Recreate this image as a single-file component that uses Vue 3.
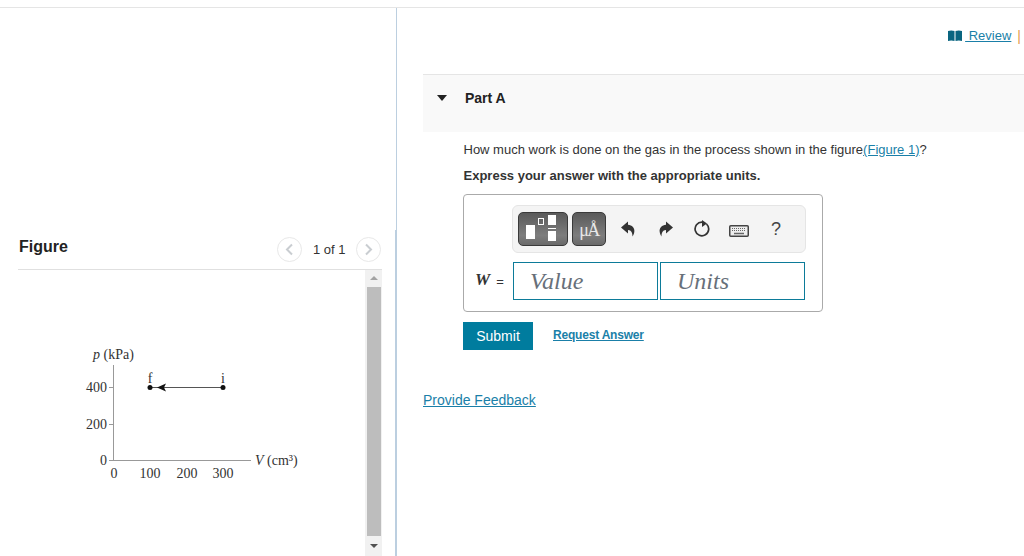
<script setup>
const ticksY = [
  { label: '400', y: 47 },
  { label: '200', y: 84 },
  { label: '0', y: 120 },
]
const ticksX = [
  { label: '0', x: 44 },
  { label: '100', x: 80 },
  { label: '200', x: 117 },
  { label: '300', x: 153 },
]
</script>

<template>
  <div class="page">
    <aside class="left">
      <div class="pane">
        <header class="fig-head">
          <h2 class="fig-title">Figure</h2>
          <div class="pager">
            <span class="circle">
              <svg width="9" height="13" viewBox="0 0 9 13"><path d="M7 1.5 2 6.5 7 11.5" fill="none" stroke="#c9cdd1" stroke-width="2" /></svg>
            </span>
            <span class="pager-text">1 of 1</span>
            <span class="circle">
              <svg width="9" height="13" viewBox="0 0 9 13"><path d="M2 1.5 7 6.5 2 11.5" fill="none" stroke="#c9cdd1" stroke-width="2" /></svg>
            </span>
          </div>
        </header>
        <div class="fig-body">
          <div class="canvas">
            <svg class="graph" width="240" height="150" viewBox="0 0 240 150">
              <g class="serif">
                <text x="23" y="19"><tspan font-style="italic">p</tspan> (kPa)</text>
                <text v-for="t in ticksY" :key="t.label" x="37" :y="t.y + 5" text-anchor="end">{{ t.label }}</text>
                <text v-for="t in ticksX" :key="t.label" :x="t.x" y="138" text-anchor="middle">{{ t.label }}</text>
                <text x="185" y="125"><tspan font-style="italic">V</tspan> (cm³)</text>
                <text x="80" y="43" text-anchor="middle">f</text>
                <text x="153" y="43" text-anchor="middle">i</text>
              </g>
              <path d="M43.5 25V120.500H181" fill="none" stroke="#999" />
              <path d="M39 47.500H44M39 84.500H44M39 120.500H44" fill="none" stroke="#999" />
              <path d="M80 47.500H153" stroke="#555" />
              <path d="M87 47.500 96 43.500 94 47.500 96 51.500Z" fill="#111" />
              <circle cx="80" cy="47.500" r="2.500" fill="#111" />
              <circle cx="153" cy="47.500" r="2.500" fill="#111" />
            </svg>
          </div>
          <div class="scrollbar">
            <span class="arrow-up"></span>
            <span class="thumb"></span>
            <span class="arrow-down"></span>
          </div>
        </div>
      </div>
    </aside>

    <main class="right">
      <div class="review-row">
        <svg class="book" width="14" height="11" viewBox="0 0 14 11"><path d="M0 1C2 .2 4.500 .2 6.500 1V11C4.500 10.200 2 10.200 0 11zM7.500 1C9.500 .2 12 .2 14 1V11C12 10.200 9.500 10.200 7.500 11z" fill="#0a6580" /></svg>
        <a class="review">&nbsp;Review</a>
        <span class="pipe">|</span>
      </div>

      <div class="part-head">
        <span class="caret"></span>
        <span class="part-title">Part A</span>
      </div>

      <div class="part-body">
        <p class="question">How much work is done on the gas in the process shown in the figure<a class="link">(Figure 1)</a>?</p>
        <p class="instruction">Express your answer with the appropriate units.</p>

        <div class="answer">
          <div class="toolbar">
            <button class="tool tool-wide">
              <svg width="48" height="32" viewBox="0 0 48 32">
                <rect x="7" y="12" width="9" height="14" fill="#fff" />
                <rect x="19.500" y="5.500" width="5" height="6" fill="none" stroke="#fff" />
                <rect x="29" y="2" width="8" height="10" fill="#fff" />
                <rect x="29" y="15" width="8" height="1" fill="#fff" />
                <rect x="29" y="18" width="8" height="10" fill="#fff" />
              </svg>
            </button>
            <button class="tool tool-unit">μÅ</button>
            <svg class="ic ic-undo" width="16" height="16" viewBox="0 0 16 16"><path d="M1 6.500 8 .5V3.800C12 4 15 7 14.300 11 14 13 13 14.500 12.500 15.500 12.500 12 11.500 9 8 9V12.500Z" fill="#333" /></svg>
            <svg class="ic ic-redo" width="16" height="16" viewBox="0 0 16 16"><path transform="matrix(-1 0 0 1 16 0)" d="M1 6.500 8 .5V3.800C12 4 15 7 14.300 11 14 13 13 14.500 12.500 15.500 12.500 12 11.500 9 8 9V12.500Z" fill="#333" /></svg>
            <svg class="ic ic-reload" width="18" height="18" viewBox="0 0 18 18"><path d="M12.500 4A6.800 6.800 0 1 1 8 2.200" fill="none" stroke="#333" stroke-width="1.700" /><path d="M8 0 13 3.500 8 7Z" fill="#333" /></svg>
            <svg class="ic ic-keys" width="20" height="12" viewBox="0 0 20 12"><rect x="0.750" y="0.750" width="18.500" height="10.500" rx="1" fill="#eee" stroke="#444" stroke-width="1.500" /><path d="M3 3.500h14M3 5.500h14" stroke="#666" stroke-dasharray="1 1" /><path d="M5 8.500h10" stroke="#666" stroke-width="1.500" /></svg>
            <span class="help">?</span>
          </div>
          <div class="inputs">
            <span class="var"><i>W</i><span class="eq">=</span></span>
            <div class="field">Value</div>
            <div class="field">Units</div>
          </div>
        </div>

        <div class="actions">
          <button class="submit">Submit</button>
          <a class="request">Request Answer</a>
        </div>
      </div>

      <a class="feedback">Provide Feedback</a>
    </main>
  </div>
</template>

<style>
html, body { margin: 0; background: #fff; overflow: hidden; }
</style>

<style scoped>
.page {
  width: 1024px;
  height: 556px;
  box-sizing: border-box;
  padding-top: 7px;
  display: flex;
  flex-wrap: wrap;
  align-content: flex-start;
  font-family: "Liberation Sans", Arial, sans-serif;
  color: #333;
  overflow: hidden;
}
.page::before {
  content: "";
  flex: 0 0 100%;
  height: 1px;
  background: #e5e5e5;
}
.left {
  width: 397px;
  height: 548px;
  flex: none;
  box-sizing: border-box;
  border-right: 1px solid #bccfe0;
  padding-top: 222px;
  display: flex;
}
.pane {
  width: 100%;
  box-sizing: border-box;
  border-right: 1px solid #bccfe0;
  padding: 0 13px 0 18px;
  display: flex;
  flex-direction: column;
}
.fig-head {
  height: 40px;
  flex: none;
  box-sizing: border-box;
  display: flex;
  justify-content: space-between;
  border-bottom: 1px solid #e0e0e0;
}
.fig-title {
  margin: 7px 0 0 1px;
  font-size: 16px;
  line-height: 20px;
  font-weight: 700;
  color: #222;
}
.pager {
  display: flex;
  align-items: center;
  gap: 11px;
  height: 25px;
  margin: 7px 1px 0 0;
}
.circle {
  width: 25px;
  height: 25px;
  box-sizing: border-box;
  border: 1px solid #e8e8e8;
  border-radius: 50%;
  display: flex;
  align-items: center;
  justify-content: center;
}
.pager-text {
  width: 32px;
  font-size: 13px;
  white-space: nowrap;
  color: #333;
}
.fig-body {
  flex: 1;
  display: flex;
  min-height: 0;
}
.canvas {
  flex: 1;
  padding: 70px 0 0 52px;
}
.graph {
  display: block;
}
.serif text {
  font-family: "Liberation Serif", serif;
  font-size: 14px;
  fill: #333;
}
.scrollbar {
  width: 17px;
  flex: none;
  background: #f1f1f1;
  display: flex;
  flex-direction: column;
  align-items: center;
}
.arrow-up, .arrow-down {
  width: 0;
  height: 0;
  border-left: 4px solid transparent;
  border-right: 4px solid transparent;
}
.arrow-up {
  border-bottom: 4px solid #a3a3a3;
  margin: 6px 0 7px;
}
.arrow-down {
  border-top: 4px solid #505050;
  margin-top: 8px;
}
.thumb {
  width: 14px;
  height: 249px;
  background: #bdbdbd;
}
.right {
  flex: 1;
  min-width: 0;
  display: flex;
  flex-direction: column;
  padding-left: 26px;
}
.review-row {
  height: 66px;
  box-sizing: border-box;
  padding: 19px 3px 0 0;
  display: flex;
  justify-content: flex-end;
  align-items: flex-start;
  font-size: 13px;
  line-height: 18px;
}
.book {
  margin: 3px 3px 0 0;
}
.review {
  color: #1a7fa8;
  text-decoration: underline;
}
.pipe {
  color: #e59a4a;
  margin-left: 6px;
  font-size: 14px;
}
.part-head {
  height: 58px;
  box-sizing: border-box;
  border-top: 1px solid #e5e5e5;
  background: #f9f9f9;
  display: flex;
  align-items: flex-start;
  padding: 14px 0 0 14px;
}
.caret {
  width: 0;
  height: 0;
  border-left: 5.5px solid transparent;
  border-right: 5.5px solid transparent;
  border-top: 6px solid #222;
  margin-top: 6px;
}
.part-title {
  margin-left: 18px;
  font-size: 14px;
  font-weight: 700;
  color: #222;
  line-height: 18px;
}
.part-body {
  padding: 9px 0 0 40px;
}
.question, .instruction {
  margin: 0;
  padding-left: 0.5px;
  font-size: 13px;
  line-height: 18px;
}
.instruction {
  margin-top: 8px;
  font-weight: 700;
}
.link {
  color: #1a7fa8;
  text-decoration: underline;
}
.answer {
  width: 360px;
  height: 118px;
  box-sizing: border-box;
  margin-top: 9px;
  border: 1px solid #aaa;
  border-radius: 4px;
  padding: 10px 0 0 11px;
}
.toolbar {
  margin-left: 37px;
  width: 294px;
  height: 48px;
  box-sizing: border-box;
  background: #f4f4f4;
  border: 1px solid #e5e5e5;
  border-radius: 6px;
  display: flex;
  align-items: center;
  padding-left: 5px;
}
.tool {
  height: 34px;
  box-sizing: border-box;
  flex: none;
  padding: 0;
  border: 1px solid #3a3a3a;
  border-radius: 5px;
  background: linear-gradient(#5a5a5a, #7d7d7d 70%, #6a6a6a);
  display: flex;
  align-items: center;
  justify-content: center;
  color: #e8e8e8;
  font-family: "Liberation Serif", serif;
}
.tool svg {
  display: block;
}
.tool-wide {
  width: 50px;
}
.tool-unit {
  width: 34px;
  margin-left: 4px;
  padding-top: 2px;
  font-size: 18px;
  letter-spacing: -1.5px;
}
.ic {
  flex: none;
}
.ic-undo { margin-left: 14px; }
.ic-redo { margin-left: 22px; }
.ic-reload { margin-left: 20px; }
.ic-keys { margin-left: 17px; margin-top: 3px; }
.help {
  margin-left: 22px;
  font-size: 18px;
  color: #444;
}
.inputs {
  display: flex;
  align-items: center;
  margin-top: 9px;
}
.var {
  width: 38px;
  display: flex;
  align-items: center;
  gap: 6px;
  box-sizing: border-box;
}
.var i {
  font-family: "Liberation Serif", serif;
  font-weight: 700;
  font-size: 17px;
  color: #333;
  margin-top: -2px;
}
.eq {
  font-size: 13px;
}
.field {
  width: 145px;
  height: 38px;
  box-sizing: border-box;
  border: 1px solid #0c7b99;
  margin-right: 2px;
  padding-left: 16px;
  font-family: "Liberation Serif", serif;
  font-style: italic;
  font-size: 24px;
  line-height: 37px;
  color: #67707a;
}
.actions {
  display: flex;
  align-items: center;
  margin-top: 10px;
}
.submit {
  width: 70px;
  height: 28px;
  border: 0;
  padding: 0;
  background: #007c9e;
  color: #fff;
  font: 14px "Liberation Sans", Arial, sans-serif;
}
.request {
  margin: 0 0 2px 20px;
  color: #1a7fa8;
  font-size: 12px;
  letter-spacing: -0.2px;
  font-weight: 700;
  text-decoration: underline;
}
.feedback {
  margin-top: 41px;
  align-self: flex-start;
  color: #1a7fa8;
  font-size: 14px;
  line-height: 18px;
  text-decoration: underline;
}
</style>
